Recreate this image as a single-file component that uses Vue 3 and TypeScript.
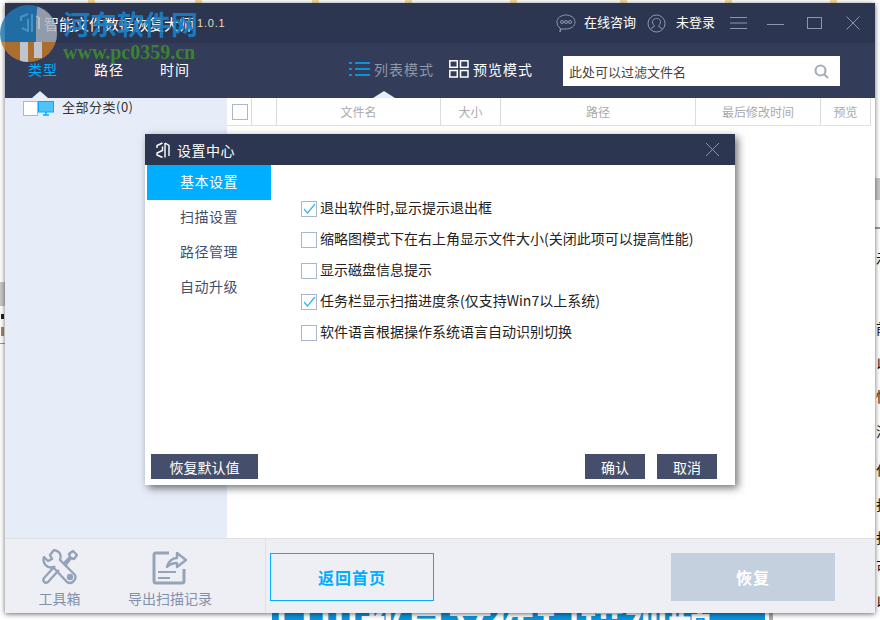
<template>
  <div class="desktop">
    <!-- what shows around the app window -->
    <i v-for="x in topBits" :key="x" class="top-bit" :style="{ left: x + 'px' }"></i>
    <div class="left-strip">
      <i class="left-gray"></i>
      <i class="left-char"></i>
      <i class="left-mark"></i>
      <i class="left-line"></i>
    </div>
    <div class="right-strip">
      <i class="right-gray"></i>
      <i class="right-line"></i>
      <span v-for="c in rightChars" :key="c.y" class="right-char" :style="{ top: c.y + 'px' }">{{ c.t }}</span>
    </div>
    <div class="banner">日川都易文件扫描视频</div>
    <i class="banner-edge"></i>

    <div class="window">
      <header class="titlebar">
        <svg class="logo" width="26" height="24" viewBox="0 0 26 24" fill="none" stroke="#fff" stroke-width="2">
          <path d="M11 3 4 6v4M11 8v12l-6-3" />
          <path d="M15 3v18M19 5l3 2v11" />
        </svg>
        <span class="app-name">智能文件数据恢复大师</span>
        <span class="version">1.0.1</span>
        <div class="spacer"></div>
        <svg width="20" height="19" viewBox="0 0 20 19" fill="none" stroke="#8e97aa" stroke-width="1">
          <path d="M10 1c5 0 9 3 9 7s-4 7-9 7H5l-1 3 .3-4C2 13 1 11 1 8c0-4 4-7 9-7Z" />
          <circle cx="6" cy="8" r="1.5" /><circle cx="10" cy="8" r="1.5" /><circle cx="14" cy="8" r="1.5" />
        </svg>
        <span class="tb-text consult">在线咨询</span>
        <svg width="19" height="19" viewBox="0 0 19 19" fill="none" stroke="#8e97aa" stroke-width="1">
          <circle cx="9.5" cy="9.5" r="8.5" />
          <path d="M3.5 15c2-2 3.500-1.500 4-3-2-2-2.500-4-1.500-6 1.500-2 5.500-2 7 0 1 2 .5 4-1.500 6 .5 1.500 2 1 4 3" />
        </svg>
        <span class="tb-text login">未登录</span>
        <div class="win-btns">
          <svg width="17" height="12" viewBox="0 0 17 12" stroke="#8e97aa"><path d="M0 .5h17M0 6h17M0 11.500h17" /></svg>
          <svg width="17" height="12" viewBox="0 0 17 12" stroke="#8e97aa"><path d="M0 7.500h17" /></svg>
          <svg width="15" height="12" viewBox="0 0 15 12" fill="none" stroke="#8e97aa"><rect x=".5" y=".5" width="14" height="11" /></svg>
          <svg width="14" height="14" viewBox="0 0 14 14" stroke="#8e97aa"><path d="m.5.5 13 13M13.500.5l-13 13" /></svg>
        </div>
      </header>

      <nav class="navbar">
        <div class="tabs">
          <span class="tab active">类型</span>
          <span class="tab">路径</span>
          <span class="tab">时间</span>
        </div>
        <div class="mode muted">
          <svg width="21" height="14" viewBox="0 0 21 14" stroke="#00aeff" stroke-width="1.500">
            <path d="M0 1h3M6 1h15M0 7h3M6 7h15M0 13h3M6 13h15" />
          </svg>
          <span>列表模式</span>
        </div>
        <div class="mode">
          <svg width="20" height="18" viewBox="0 0 20 18" fill="none" stroke="#fff" stroke-width="1.500">
            <rect x=".8" y=".8" width="7.500" height="6.500" /><rect x="11.500" y=".8" width="7.500" height="6.500" />
            <rect x=".8" y="10.500" width="7.500" height="6.500" /><rect x="11.500" y="10.500" width="7.500" height="6.500" />
          </svg>
          <span>预览模式</span>
        </div>
        <div class="search">
          <span>此处可以过滤文件名</span>
          <svg width="15" height="15" viewBox="0 0 15 15" fill="none" stroke="#a6afc0" stroke-width="2.200">
            <circle cx="6.500" cy="6.500" r="5" /><path d="m10 10 4 4" />
          </svg>
        </div>
        <i class="pointer type-pointer"></i>
        <i class="pointer mode-pointer"></i>
      </nav>

      <div class="body">
        <aside class="sidebar">
          <div class="cat-row">
            <span class="box"></span>
            <svg width="16" height="15" viewBox="0 0 16 15">
              <rect x=".5" y=".5" width="15" height="10.500" fill="#4fc3f7" stroke="#00aeff" />
              <path d="M5 14h6M8 11v3" stroke="#00aeff" stroke-width="1.500" />
            </svg>
            <span class="cat-text">全部分类(0)</span>
          </div>
        </aside>
        <main class="list">
          <div class="list-head">
            <div class="col"><span class="box head-box"></span></div>
            <div class="col"></div>
            <div class="col">文件名</div>
            <div class="col">大小</div>
            <div class="col">路径</div>
            <div class="col">最后修改时间</div>
            <div class="col">预览</div>
          </div>
        </main>
      </div>

      <footer class="footer">
        <div class="tools">
          <div class="tool tool-box">
            <svg width="36" height="36" viewBox="0 0 36 36" fill="none" stroke="#94a3ba" stroke-width="2.400" stroke-linejoin="round">
              <path d="M12 1 8 6l2 4-4 2-4-4c-2 6 3 12 9 10l14 15c4 3 10-2 8-7L18 11c2-6-1-9-6-10Z" />
              <path d="M17 21 6 33c-3 2-6-1-4-4l11-12M21 15l7-7-1-3 4-3 4 4-3 4-3-1-6 8" />
              <circle cx="28" cy="28" r="2" fill="#94a3ba" />
            </svg>
            <span>工具箱</span>
          </div>
          <div class="tool tool-export">
            <svg width="36" height="36" viewBox="0 0 36 36" fill="none" stroke="#94a3ba" stroke-width="3" stroke-linejoin="round">
              <path d="M17 4H4a2 2 0 0 0-2 2v26a2 2 0 0 0 2 2h26a2 2 0 0 0 2-2V20" />
              <path d="M6 23h18M6 29h12" stroke-width="2" />
              <path d="M15 18c1-5 5-9 10-9V4l9 7-9 7v-4c-4 0-7 1-10 4Z" fill="#eeeff5" stroke-width="2.400" />
            </svg>
            <span>导出扫描记录</span>
          </div>
        </div>
        <div class="actions">
          <button class="back-btn">返回首页</button>
          <button class="restore-btn">恢复</button>
        </div>
      </footer>
    </div>

    <div class="dialog">
      <div class="dlg-title">
        <svg width="14" height="16" viewBox="0 0 14 16" fill="none" stroke="#fff" stroke-width="1.400">
          <path d="M6.500 1 1 3.500V6M6.500 4.500v4L1 11v2l5.500 2.500" />
          <path d="M9 1v14.500M9 1l4 2.500V14" />
        </svg>
        <span>设置中心</span>
        <svg class="dlg-close" width="15" height="15" viewBox="0 0 15 15" stroke="#8e97aa"><path d="m1 1 13 13M14 1 1 14" /></svg>
      </div>
      <div class="dlg-main">
        <ul class="dlg-nav">
          <li v-for="(item, i) in navItems" :key="item" :class="{ current: i === 0 }">{{ item }}</li>
        </ul>
        <div class="options">
          <label v-for="opt in options" :key="opt.text" class="option">
            <span class="box opt-box">
              <svg v-if="opt.checked" width="13" height="11" viewBox="0 0 13 11" fill="none" stroke="#2fb4f5" stroke-width="1.200"><path d="m1 6 3.500 4L12 1" /></svg>
            </span>
            <span class="opt-text">{{ opt.text }}</span>
          </label>
        </div>
      </div>
      <div class="dlg-foot">
        <button class="dlg-btn reset">恢复默认值</button>
        <div class="spacer"></div>
        <button class="dlg-btn">确认</button>
        <button class="dlg-btn">取消</button>
      </div>
    </div>

    <!-- site watermark stamped over the screenshot -->
    <div class="watermark">
      <svg class="wm-logo" width="60" height="63" viewBox="0 0 60 63">
        <defs>
          <clipPath id="wm-circle"><circle cx="28.500" cy="33.500" r="28.500" /></clipPath>
        </defs>
        <g clip-path="url(#wm-circle)">
          <rect width="60" height="63" fill="#1f79b4" />
          <path d="M38 0h22v42H36V22Z" fill="#a9b2bd" />
          <path d="M0 42h60v21H0Z" fill="#c77a26" />
          <path d="M20 42h8v21h-8ZM34 42h8v16h-8Z" fill="#dfe3e8" />
        </g>
      </svg>
      <div class="wm-text">
        <span class="wm-cn">河东软件网</span>
        <span class="wm-url">www.pc0359.cn</span>
      </div>
    </div>
  </div>
</template>

<script setup lang="ts">
const topBits = [88, 195, 312, 405, 510, 620, 725, 830]

const rightChars = [
  { y: 250, t: '示' },
  { y: 320, t: '前' },
  { y: 355, t: '以' },
  { y: 388, t: '性' },
  { y: 423, t: '注' },
  { y: 461, t: '任' },
  { y: 496, t: '扫' },
  { y: 529, t: '扫' },
  { y: 558, t: '可' },
  { y: 593, t: '以' },
]

const navItems = ['基本设置', '扫描设置', '路径管理', '自动升级']

const options = [
  { text: '退出软件时,显示提示退出框', checked: true },
  { text: '缩略图模式下在右上角显示文件大小(关闭此项可以提高性能)', checked: false },
  { text: '显示磁盘信息提示', checked: false },
  { text: '任务栏显示扫描进度条(仅支持Win7以上系统)', checked: true },
  { text: '软件语言根据操作系统语言自动识别切换', checked: false },
]
</script>

<style>
html,
body {
  margin: 0;
  background: #fff;
  overflow: hidden;
}
</style>

<style scoped>
.desktop {
  position: relative;
  width: 880px;
  height: 620px;
  overflow: hidden;
  background: #fff;
  font-family: "Noto Sans CJK SC", "Liberation Sans", sans-serif;
  font-size: 14px;
  color: #333;
}

.top-bit {
  position: absolute;
  top: 0;
  width: 7px;
  height: 3px;
  background: #f5dca0;
}

.left-strip {
  position: absolute;
  left: 0;
  top: 0;
  width: 5px;
  height: 620px;
}

.left-gray {
  position: absolute;
  top: 282px;
  width: 5px;
  height: 24px;
  background: #c8c8c8;
}

.left-char {
  position: absolute;
  top: 314px;
  left: 1px;
  width: 3px;
  height: 5px;
  background: #222;
}

.left-mark {
  position: absolute;
  top: 327px;
  left: 1px;
  width: 3px;
  height: 9px;
  background: #b9805a;
}

.left-line {
  position: absolute;
  top: 343px;
  width: 5px;
  height: 1px;
  background: #999;
}

.right-strip {
  position: absolute;
  left: 875px;
  top: 0;
  width: 5px;
  height: 620px;
  overflow: hidden;
}

.right-gray {
  position: absolute;
  top: 178px;
  width: 5px;
  height: 22px;
  background: #c8c8c8;
}

.right-line {
  position: absolute;
  top: 227px;
  width: 5px;
  height: 2px;
  background: #999;
}

.right-char {
  position: absolute;
  left: 1px;
  font-size: 14px;
  line-height: 16px;
  color: #111;
}

.banner {
  position: absolute;
  left: 272px;
  top: 600px;
  width: 493px;
  height: 20px;
  overflow: hidden;
  background: #0a93dc;
  color: #fff;
  font-size: 44px;
  line-height: 44px;
  font-weight: 700;
  white-space: nowrap;
}

.banner-edge {
  position: absolute;
  left: 769px;
  top: 600px;
  width: 4px;
  height: 20px;
  background: #aaa;
}

.window {
  position: absolute;
  left: 5px;
  top: 3px;
  width: 870px;
  height: 610px;
  display: flex;
  flex-direction: column;
  background: #fff;
  box-shadow: 0 1px 5px rgba(0, 0, 0, 0.6);
}

.titlebar {
  height: 40px;
  flex: none;
  display: flex;
  align-items: center;
  background: #2d3650;
  color: #fff;
}

.logo {
  margin-left: 12px;
}

.app-name {
  margin-left: 1px;
  font-size: 15px;
  white-space: nowrap;
}

.version {
  margin-left: 3px;
  font-family: "Liberation Sans", sans-serif;
  font-size: 11px;
  letter-spacing: 0.8px;
  color: #e8dcc4;
}

.spacer {
  flex: 1;
}

.tb-text {
  padding-bottom: 4px;
  font-size: 13px;
  white-space: nowrap;
}

.consult {
  margin: 0 11px 0 8px;
}

.login {
  margin-left: 10px;
}

.win-btns {
  display: flex;
  align-items: center;
  margin: 0 15px;
}

.win-btns svg:nth-child(2) {
  margin-left: 20px;
}

.win-btns svg:nth-child(3) {
  margin-left: 23px;
}

.win-btns svg:nth-child(4) {
  margin-left: 24px;
}

.navbar {
  position: relative;
  height: 55px;
  flex: none;
  display: flex;
  align-items: center;
  background: #333c58;
  color: #fff;
}

.tabs {
  display: flex;
  gap: 36px;
  margin-left: 23px;
  margin-bottom: 3px;
  width: 321px;
}

.tab {
  font-size: 14px;
  letter-spacing: 1px;
  white-space: nowrap;
}

.tab.active {
  color: #00aeff;
}

.mode {
  display: flex;
  align-items: center;
  gap: 4px;
  width: 100px;
  font-size: 14px;
  letter-spacing: 1px;
  white-space: nowrap;
  margin-bottom: 3px;
}

.mode.muted {
  color: #8e97aa;
}

.search {
  width: 277px;
  height: 30px;
  box-sizing: border-box;
  margin-left: 14px;
  padding: 1px 11px 0 6px;
  display: flex;
  align-items: center;
  justify-content: space-between;
  background: #fff;
  color: #444;
  font-size: 13px;
}

.pointer {
  position: absolute;
  bottom: 0;
  border-left: 8px solid transparent;
  border-right: 8px solid transparent;
  border-bottom: 7px solid #e6edf8;
}

.type-pointer {
  left: 27px;
}

.mode-pointer {
  left: 368px;
  border-left-width: 11px;
  border-right-width: 11px;
}

.body {
  flex: 1;
  display: flex;
  min-height: 0;
}

.sidebar {
  width: 222px;
  flex: none;
  background: #e6edf8;
}

.cat-row {
  display: flex;
  align-items: center;
  height: 18px;
  margin-top: 1px;
  padding-left: 18px;
}

.box {
  width: 15px;
  height: 15px;
  flex: none;
  box-sizing: border-box;
  display: inline-flex;
  align-items: center;
  justify-content: center;
  border: 1px solid #a9b7cb;
  background: #fff;
}

.cat-text {
  margin-left: 8px;
  padding-bottom: 4px;
  font-size: 13px;
  letter-spacing: 0.5px;
  color: #333;
  white-space: nowrap;
}

.list {
  flex: 1;
  background: #fff;
}

.list-head {
  display: grid;
  grid-template-columns: 25px 25px 164px 60px 195px 125px 50px;
  height: 27px;
  width: 644px;
  border-bottom: 1px solid #e2e2e2;
  color: #aaa;
  font-size: 12px;
}

.col {
  display: flex;
  align-items: center;
  justify-content: center;
  border-right: 1px solid #ddd;
  white-space: nowrap;
}

.col:first-child {
  padding-left: 1px;
}

.head-box {
  width: 16px;
  height: 16px;
}

.footer {
  height: 75px;
  flex: none;
  display: flex;
  box-sizing: border-box;
  border-top: 1px solid #dfe0e6;
  background: #eeeff5;
}

.tools {
  width: 261px;
  flex: none;
  display: flex;
  box-sizing: border-box;
  border-right: 1px solid #dfe0e6;
}

.tool {
  display: flex;
  flex-direction: column;
  align-items: center;
  padding-top: 10px;
  color: #8291ab;
  font-size: 14px;
  white-space: nowrap;
}

.tool span {
  margin-top: 3px;
  line-height: 20px;
}

.tool-box {
  margin-left: 34px;
  width: 41px;
}

.tool-export {
  margin-left: 48px;
  width: 84px;
}

.actions {
  flex: 1;
  display: flex;
  align-items: center;
  justify-content: space-between;
  padding: 2px 40px 0 4px;
}

.back-btn,
.restore-btn {
  width: 164px;
  height: 48px;
  font-family: inherit;
  font-size: 16px;
  font-weight: 700;
  letter-spacing: 1px;
}

.back-btn {
  border: 1px solid #00aeff;
  background: transparent;
  color: #00aeff;
}

.restore-btn {
  border: 0;
  background: #c5d0df;
  color: #fff;
}

.dialog {
  position: absolute;
  left: 145px;
  top: 134px;
  width: 590px;
  height: 351px;
  display: flex;
  flex-direction: column;
  background: #fff;
  box-shadow: 3px 3px 8px rgba(0, 0, 0, 0.55);
}

.dlg-title {
  height: 31px;
  flex: none;
  display: flex;
  align-items: center;
  gap: 7px;
  padding-left: 11px;
  background: #2d3650;
  color: #fff;
  font-size: 14px;
  letter-spacing: 0.5px;
}

.dlg-close {
  margin-left: auto;
  margin-right: 15px;
}

.dlg-main {
  flex: 1;
  display: flex;
  min-height: 0;
}

.dlg-nav {
  list-style: none;
  margin: 0 0 0 2px;
  padding: 0;
  width: 124px;
  flex: none;
}

.dlg-nav li {
  height: 35px;
  padding-left: 33px;
  line-height: 33px;
  font-size: 14px;
  letter-spacing: 0.5px;
  color: #454f6b;
}

.dlg-nav li.current {
  background: #00aeff;
  color: #fff;
}

.options {
  padding: 28px 0 0 30px;
  display: flex;
  flex-direction: column;
}

.option {
  height: 31px;
  display: flex;
  align-items: center;
  gap: 3px;
  font-size: 14px;
  color: #222;
  white-space: nowrap;
}

.opt-box {
  width: 16px;
  height: 16px;
}

.opt-text {
  padding-bottom: 3px;
}

.dlg-foot {
  height: 31px;
  flex: none;
  display: flex;
  align-items: flex-start;
  gap: 12px;
  padding: 0 18px 0 6px;
}

.dlg-btn {
  width: 60px;
  height: 25px;
  padding: 0;
  border: 0;
  background: #454f6b;
  color: #fff;
  font-family: inherit;
  font-size: 14px;
}

.dlg-btn.reset {
  width: 107px;
}

.watermark {
  position: absolute;
  left: 0;
  top: 0;
  display: flex;
  gap: 3px;
  pointer-events: none;
}

.wm-logo {
  opacity: 0.82;
}

.wm-text {
  display: flex;
  flex-direction: column;
  margin-top: 6px;
}

.wm-cn {
  font-family: "Noto Sans CJK SC", sans-serif;
  font-size: 27px;
  line-height: 36px;
  font-weight: 700;
  color: rgba(22, 128, 200, 0.92);
  white-space: nowrap;
}

.wm-url {
  font-family: "Liberation Serif", serif;
  font-size: 20px;
  line-height: 20px;
  font-weight: 700;
  color: rgba(62, 143, 44, 0.85);
  white-space: nowrap;
}
</style>
